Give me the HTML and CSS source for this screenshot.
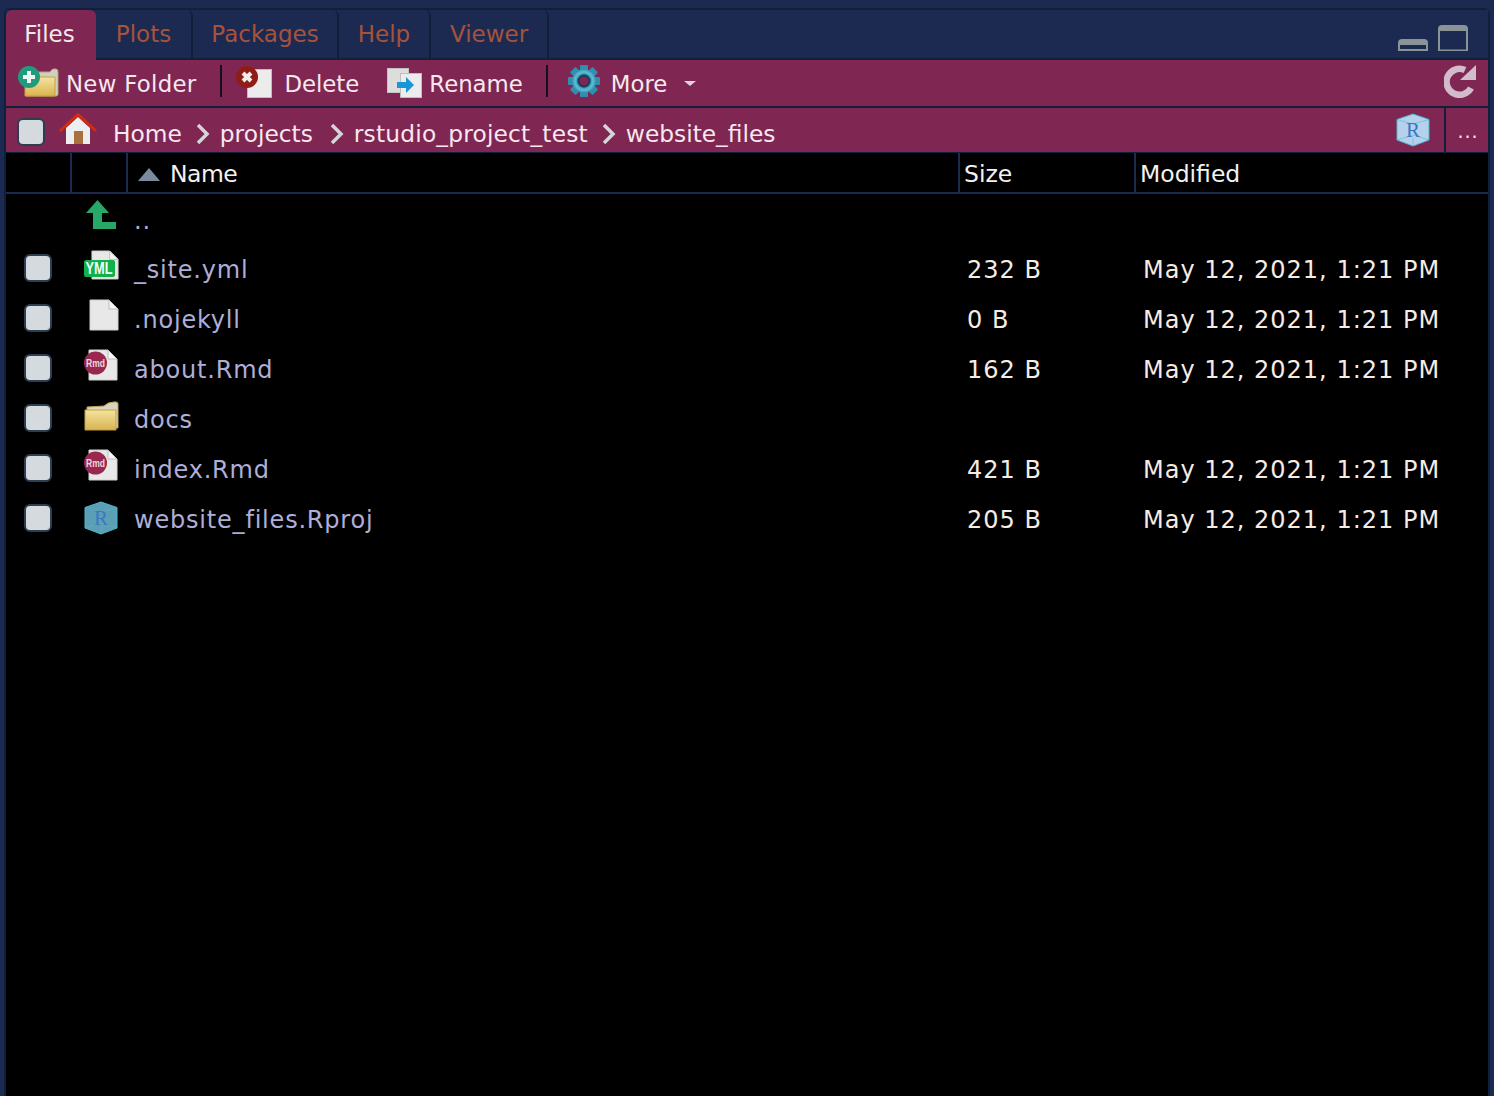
FILE: index.html
```html
<!DOCTYPE html>
<html lang="en">
<head>
    <meta charset="UTF-8">
    <title>Files</title>
    <link rel="stylesheet" href="styles.css">
</head>
<body>
<svg class="defs" width="0" height="0">
    <defs>
        <linearGradient id="folderFill" x1="0" y1="0" x2="0" y2="1">
            <stop offset="0" stop-color="#f4e3a0"/>
            <stop offset="1" stop-color="#d9b44f"/>
        </linearGradient>
        <radialGradient id="gearFill">
            <stop offset="0.4" stop-color="#1c6d8c"/>
            <stop offset="0.75" stop-color="#5fc0d6"/>
            <stop offset="1" stop-color="#2f8fae"/>
        </radialGradient>
        <symbol id="page" viewBox="0 0 30 32">
            <path d="M1 1H20L29 10V31H1Z" fill="#e8e8e8" stroke="#cfcfcf"/>
            <path d="M20 1V10H29Z" fill="#f6f6f6" stroke="#bdbdbd"/>
        </symbol>
        <symbol id="rmd" viewBox="0 0 34 32">
            <use href="#page" x="4" y="0" width="30" height="32"/>
            <circle cx="11.500" cy="14" r="11.500" fill="#98284f"/>
            <text x="11.500" y="17.500" class="badge-text" text-anchor="middle" textLength="19" lengthAdjust="spacingAndGlyphs">Rmd</text>
        </symbol>
        <symbol id="cube" viewBox="0 0 34 34">
            <path class="cube-face" d="M17 1L33 6.500V27L17 33L1 27V6.500Z"/>
            <path d="M1 6.500L17 11L33 6.500M17 33V25M1 27L17 22L33 27" fill="none" stroke="#4fb6cf" stroke-width="0.800" stroke-opacity="0.700"/>
            <path d="M1 6.500L17 1L33 6.500V27L17 33L1 27Z" fill="none" stroke="#4fb6cf" stroke-width="1"/>
            <text x="17" y="24" class="cube-text" text-anchor="middle">R</text>
        </symbol>
        <symbol id="chev" viewBox="0 0 14 22">
            <path d="M2 2L11 11L2 20" fill="none" stroke="#d5d5d8" stroke-width="3.500"/>
        </symbol>
    </defs>
</svg>

<div class="pane">
    <div class="tabs">
        <div class="tab tab-active">Files</div>
        <div class="tab">Plots</div>
        <div class="tab">Packages</div>
        <div class="tab">Help</div>
        <div class="tab">Viewer</div>
        <div class="window-btns">
            <svg width="30" height="14" viewBox="0 0 30 14">
                <path d="M0 13V5Q0 1 4 1H26Q30 1 30 5V13Z" fill="#8a9396"/>
                <rect x="2" y="7" width="26" height="4" fill="#1c2a52"/>
            </svg>
            <svg width="30" height="27" viewBox="0 0 30 27">
                <path d="M0 26V4Q0 0 4 0H26Q30 0 30 4V26Z" fill="#8a9396"/>
                <rect x="2" y="6" width="26" height="18.500" fill="#1c2a52"/>
            </svg>
        </div>
    </div>

    <div class="toolbar">
        <div class="tool tool-new">
            <svg width="42" height="32" viewBox="0 0 42 32">
                <path d="M8 6H32Q34 2 38 3Q40 3 40 6V28Q40 30 38 30H8Z" fill="#cfcfc4" stroke="#b8a863"/>
                <path d="M7 11H37V30H7Z" fill="url(#folderFill)" stroke="#c4a13f"/>
                <circle cx="11" cy="11" r="11" fill="#1f9c7e"/>
                <path d="M9 5H13V9H17V13H13V17H9V13H5V9H9Z" fill="#f0f5f2"/>
            </svg>
            <span>New Folder</span>
        </div>
        <div class="tool-sep"></div>
        <div class="tool tool-delete">
            <svg width="36" height="32" viewBox="0 0 36 32">
                <rect x="11.500" y="3.500" width="24" height="28" fill="#ececec" stroke="#bdbdbd"/>
                <circle cx="11" cy="11" r="11" fill="#8f1d16"/>
                <path d="M7 7L15 15M15 7L7 15" stroke="#f4ecea" stroke-width="4"/>
            </svg>
            <span>Delete</span>
        </div>
        <div class="tool tool-rename">
            <svg width="36" height="32" viewBox="0 0 36 32">
                <rect x="0.500" y="1.500" width="21" height="24" fill="#dddddd" stroke="#c4c4c4"/>
                <rect x="13.500" y="6.500" width="21" height="24" fill="#ececec" stroke="#bdbdbd"/>
                <path d="M10 15H19V10L27 18L19 26V21H10Z" fill="#1798d6"/>
            </svg>
            <span>Rename</span>
        </div>
        <div class="tool-sep tool-sep-more"></div>
        <div class="tool tool-more">
            <svg width="34" height="34" viewBox="0 0 34 34">
                <g class="gear-teeth">
                    <rect x="13" y="1" width="8" height="32" rx="1"/>
                    <rect x="13" y="1" width="8" height="32" rx="1" transform="rotate(45 17 17)"/>
                    <rect x="13" y="1" width="8" height="32" rx="1" transform="rotate(90 17 17)"/>
                    <rect x="13" y="1" width="8" height="32" rx="1" transform="rotate(135 17 17)"/>
                </g>
                <circle cx="17" cy="17" r="12" fill="url(#gearFill)"/>
                <circle cx="17" cy="17" r="5.500" fill="#7f2653" stroke="#123f5c" stroke-width="2"/>
            </svg>
            <span>More</span>
            <i class="caret"></i>
        </div>
        <svg class="refresh" width="32" height="34" viewBox="0 0 32 34">
            <path d="M27 24A13 13 0 1 1 21 6" fill="none" stroke="#d2bccb" stroke-width="6.500"/>
            <path d="M32 1V16H16Z" fill="#d2bccb"/>
        </svg>
    </div>

    <div class="pathbar">
        <div class="path-main">
            <i class="check check-path"></i>
            <svg class="home" width="38" height="32" viewBox="0 0 38 32">
                <path d="M7 15L19 4L31 15V31H7Z" fill="#eceef0"/>
                <path d="M1 18L19 1.500L37 18" fill="none" stroke="#d42a10" stroke-width="3"/>
                <rect x="15" y="18" width="9" height="13" fill="#a8713f"/>
            </svg>
            <span class="crumb crumb-home">Home</span>
            <svg class="chev" width="14" height="22"><use href="#chev"/></svg>
            <span class="crumb">projects</span>
            <svg class="chev chev-wide" width="14" height="22"><use href="#chev"/></svg>
            <span class="crumb crumb-long">rstudio_project_test</span>
            <svg class="chev" width="14" height="22"><use href="#chev"/></svg>
            <span class="crumb">website_files</span>
            <svg class="project-icon" width="34" height="34"><use href="#cube"/></svg>
        </div>
        <div class="path-more">...</div>
    </div>

    <div class="file-head">
        <div class="head-cell"></div>
        <div class="head-cell"></div>
        <div class="head-cell head-name"><i class="sort-up"></i>Name</div>
        <div class="head-cell head-size">Size</div>
        <div class="head-cell head-mod">Modified</div>
    </div>

    <div class="file-row row-up">
        <div></div>
        <div class="cell-icon">
            <svg width="30" height="30" viewBox="0 0 30 30">
                <path d="M11.500 0L23 13H16V22H30V29H7V13H0Z" fill="#28a868"/>
            </svg>
        </div>
        <div class="cell-name">..</div>
    </div>

    <div class="file-row">
        <div class="cell-check"><i class="check"></i></div>
        <div class="cell-icon">
            <svg class="icon-yml" width="36" height="32" viewBox="0 0 36 32">
                <use href="#page" x="7" y="0" width="28" height="32"/>
                <rect x="0" y="11" width="31" height="17" rx="2" fill="#10b04a"/>
                <text x="15" y="25" class="yml-text" text-anchor="middle" textLength="27" lengthAdjust="spacingAndGlyphs">YML</text>
            </svg>
        </div>
        <div class="cell-name">_site.yml</div>
        <div class="cell-size">232 B</div>
        <div class="cell-mod">May 12, 2021, 1:21 PM</div>
    </div>

    <div class="file-row">
        <div class="cell-check"><i class="check"></i></div>
        <div class="cell-icon"><svg class="icon-page" width="30" height="32"><use href="#page"/></svg></div>
        <div class="cell-name">.nojekyll</div>
        <div class="cell-size">0 B</div>
        <div class="cell-mod">May 12, 2021, 1:21 PM</div>
    </div>

    <div class="file-row">
        <div class="cell-check"><i class="check"></i></div>
        <div class="cell-icon"><svg class="icon-rmd" width="34" height="32"><use href="#rmd"/></svg></div>
        <div class="cell-name">about.Rmd</div>
        <div class="cell-size">162 B</div>
        <div class="cell-mod">May 12, 2021, 1:21 PM</div>
    </div>

    <div class="file-row">
        <div class="cell-check"><i class="check"></i></div>
        <div class="cell-icon">
            <svg class="icon-folder" width="35" height="30" viewBox="0 0 35 30">
                <path d="M3 6L20 5Q24 1 30 1H32Q34 1 34 3V27H3Z" fill="#d8d4c0" stroke="#b8a05a"/>
                <path d="M1 9H32V29H1Z" fill="url(#folderFill)" stroke="#c4a13f"/>
            </svg>
        </div>
        <div class="cell-name">docs</div>
    </div>

    <div class="file-row">
        <div class="cell-check"><i class="check"></i></div>
        <div class="cell-icon"><svg class="icon-rmd" width="34" height="32"><use href="#rmd"/></svg></div>
        <div class="cell-name">index.Rmd</div>
        <div class="cell-size">421 B</div>
        <div class="cell-mod">May 12, 2021, 1:21 PM</div>
    </div>

    <div class="file-row">
        <div class="cell-check"><i class="check"></i></div>
        <div class="cell-icon"><svg class="icon-cube" width="34" height="34"><use href="#cube"/></svg></div>
        <div class="cell-name">website_files.Rproj</div>
        <div class="cell-size">205 B</div>
        <div class="cell-mod">May 12, 2021, 1:21 PM</div>
    </div>
</div>
</body>
</html>
```

FILE: styles.css
```css
* {
    box-sizing: border-box;
}
html, body {
    margin: 0;
    height: 100%;
}
body {
    font-family: "DejaVu Sans", sans-serif;
    font-size: 24px;
    background-color: #1c2a52;
    padding: 8px 4px 0 4px;
    overflow: hidden;
}
.defs {
    position: absolute;
}
.pane {
    height: 1088px;
    background-color: #000;
    border: 2px solid #10203a;
    border-bottom: none;
    border-radius: 6px 6px 0 0;
}

/* tabs */
.tabs {
    display: flex;
    height: 50px;
    background-color: #1c2a52;
    border-bottom: 2px solid #10203a;
}
.tab {
    height: 48px;
    padding-top: 11px;
    text-align: center;
    color: #a5533c;
    font-size: 23px;
    border-right: 2px solid #10203a;
    border-radius: 6px 6px 0 0;
}
.tab:nth-child(1) { width: 90px; }
.tab:nth-child(2) { width: 97px; }
.tab:nth-child(3) { width: 146px; }
.tab:nth-child(4) { width: 92px; }
.tab:nth-child(5) { width: 118px; }
.tab-active {
    height: 50px;
    padding-right: 3px;
    background-color: #7f2653;
    color: #f4e6ea;
    border-right: none;
}
.window-btns {
    margin-left: auto;
    display: flex;
    align-items: flex-end;
    gap: 10px;
    padding: 0 20px 6px 0;
}

/* toolbar */
.toolbar {
    display: flex;
    align-items: center;
    height: 46px;
    background-color: #7f2653;
    color: #f7e8ee;
    font-size: 22.800px;
}
.tool {
    display: flex;
    align-items: center;
}
.tool span {
    padding-top: 2px;
}
.tool-new { margin-left: 12px; gap: 6px; letter-spacing: 0.300px; }
.tool-new svg { margin-bottom: 2px; }
.tool-delete { margin-left: 14px; gap: 12px; }
.tool-delete svg { margin-bottom: 2px; }
.tool-rename { margin-left: 28px; gap: 6px; }
.tool-more { margin-left: 19px; gap: 10px; }
.tool-more svg { margin-bottom: 4px; }
.gear-teeth { fill: #2f8fae; }
.tool-sep {
    width: 2px;
    height: 32px;
    margin-left: 24px;
    margin-bottom: 4px;
    background-color: #14101c;
}
.tool-sep-more {
    margin-left: 23px;
}
.caret {
    width: 0;
    height: 0;
    margin-left: 7px;
    border-left: 6px solid transparent;
    border-right: 6px solid transparent;
    border-top: 5px solid #e2d3da;
}
.refresh {
    margin-left: auto;
    margin-right: 12px;
    margin-bottom: 4px;
}

/* path */
.pathbar {
    display: flex;
    height: 47px;
    background-color: #7f2653;
    border-top: 2px solid #10203a;
    border-bottom: 1px solid #10203a;
    color: #f7e8ee;
    font-size: 23.300px;
}
.path-main {
    flex: 1;
    display: flex;
    align-items: center;
    padding-left: 11px;
    border-right: 2px solid #10203a;
}
.path-more {
    width: 42px;
    text-align: center;
    font-size: 19px;
    padding: 12px 0 0 2px;
    letter-spacing: 1px;
}
.check {
    display: block;
    width: 28px;
    height: 28px;
    background-color: #d4dade;
    border: 2px solid #2c3e50;
    border-radius: 6px;
}
.check-path {
    margin-top: 3px;
}
.home {
    margin-left: 14px;
    margin-bottom: 2px;
}
.crumb {
    margin-top: 7px;
}
.crumb-home {
    margin-left: 16px;
}
.crumb-long {
    letter-spacing: 0.200px;
}
.chev {
    margin: 7px 10px 0 14px;
}
.chev-wide {
    margin-left: 17px;
}
.project-icon {
    --cube-fill: #b6d1ec;
    margin-left: auto;
    margin-right: 14px;
}

/* file list */
.file-head {
    display: grid;
    grid-template-columns: 66px 56px 832px 176px 1fr;
    height: 41px;
    color: #f2f2f2;
    font-size: 23.500px;
    border-bottom: 2px solid #1c2a52;
}
.head-cell {
    display: flex;
    align-items: center;
    border-right: 2px solid #1c2a52;
    padding-top: 3px;
}
.head-cell:last-child {
    border-right: none;
}
.head-name { padding-left: 10px; letter-spacing: -0.500px; }
.head-size { padding-left: 4px; }
.head-mod { padding-left: 4px; }
.sort-up {
    width: 0;
    height: 0;
    margin-right: 10px;
    border-left: 11px solid transparent;
    border-right: 11px solid transparent;
    border-bottom: 13px solid #7c8a9c;
}
.file-row {
    display: grid;
    grid-template-columns: 66px 56px 832px 176px 1fr;
    align-items: center;
    height: 50px;
    color: #aeaed6;
}
.row-up {
    height: 49px;
}
.cell-check {
    padding-left: 18px;
}
.cell-icon {
    display: flex;
    padding-left: 12px;
}
.cell-icon svg {
    margin-bottom: 4px;
}
.cell-icon .icon-page { margin-left: 5px; margin-bottom: 6px; }
.cell-icon .icon-yml { margin-bottom: 6px; }
.cell-icon .icon-rmd { margin-bottom: 6px; }
.cell-icon .icon-cube {
    --cube-fill: #5c9fb5;
    margin-bottom: 0;
}
.cell-name {
    padding-left: 6px;
    padding-top: 4px;
    letter-spacing: 0.800px;
}
.cell-size,
.cell-mod {
    padding-left: 7px;
    padding-top: 4px;
    color: #f6ece4;
    letter-spacing: 1px;
}
.row-up .cell-icon {
    padding-left: 14px;
}
.row-up .cell-icon svg {
    margin-bottom: 7px;
}

/* icon labels */
.cube-face {
    fill: var(--cube-fill);
}
.badge-text {
    font-family: "Liberation Sans", sans-serif;
    font-size: 10px;
    font-weight: 700;
    fill: #f0d6de;
}
.cube-text {
    font-family: "Liberation Serif", serif;
    font-size: 21px;
    fill: #3a78c2;
}
.yml-text {
    font-family: "Liberation Sans", sans-serif;
    font-size: 16px;
    font-weight: 700;
    fill: #f2fff6;
}
```
